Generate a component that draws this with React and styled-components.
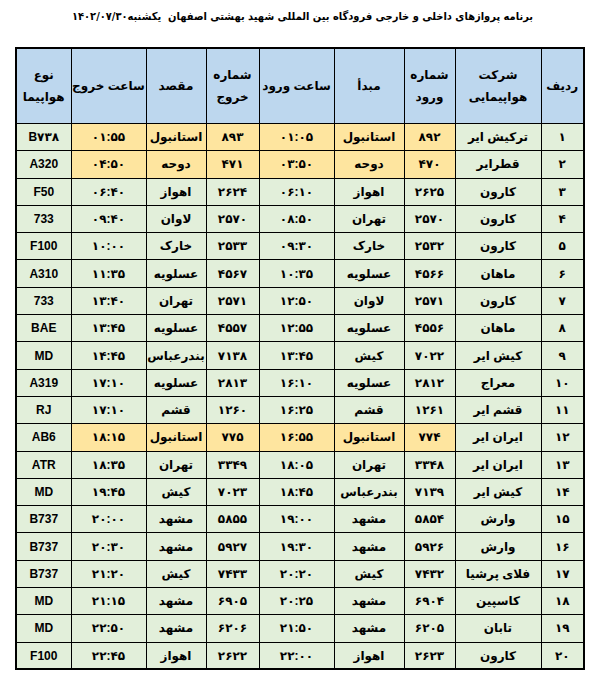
import styled, { createGlobalStyle } from "styled-components"

const GlobalStyle = createGlobalStyle`
    body {
        margin: 0;
        background: #ffffff;
        font-family: "Liberation Sans", "DejaVu Sans", sans-serif;
        color: #000;
    }
`

const columns = [
    { key: "row", title: "ردیف", width: 43 },
    { key: "airline", title: ["شرکت", "هواپیمایی"], width: 86 },
    { key: "inNo", title: ["شماره", "ورود"], width: 51, hl: true },
    { key: "from", title: "مبدأ", width: 70, hl: true },
    { key: "inTime", title: "ساعت ورود", width: 75, hl: true },
    { key: "outNo", title: ["شماره", "خروج"], width: 53, hl: true },
    { key: "to", title: "مقصد", width: 60, hl: true },
    { key: "outTime", title: "ساعت خروج", width: 75, hl: true },
    { key: "type", title: ["نوع", "هواپیما"], width: 55 },
]

const flights = [
    ["۱", "ترکیش ایر", "۸۹۲", "استانبول", "۰۱:۰۵", "۸۹۳", "استانبول", "۰۱:۵۵", "B۷۳۸", true],
    ["۲", "قطرایر", "۴۷۰", "دوحه", "۰۳:۵۰", "۴۷۱", "دوحه", "۰۴:۵۰", "A320", true],
    ["۳", "کارون", "۲۶۲۵", "اهواز", "۰۶:۱۰", "۲۶۲۴", "اهواز", "۰۶:۴۰", "F50"],
    ["۴", "کارون", "۲۵۷۰", "تهران", "۰۸:۵۰", "۲۵۷۰", "لاوان", "۰۹:۴۰", "733"],
    ["۵", "کارون", "۲۵۳۲", "خارک", "۰۹:۳۰", "۲۵۳۳", "خارک", "۱۰:۰۰", "F100"],
    ["۶", "ماهان", "۴۵۶۶", "عسلویه", "۱۰:۳۵", "۴۵۶۷", "عسلویه", "۱۱:۳۵", "A310"],
    ["۷", "کارون", "۲۵۷۱", "لاوان", "۱۲:۵۰", "۲۵۷۱", "تهران", "۱۳:۴۰", "733"],
    ["۸", "ماهان", "۴۵۵۶", "عسلویه", "۱۲:۵۵", "۴۵۵۷", "عسلویه", "۱۳:۴۵", "BAE"],
    ["۹", "کیش ایر", "۷۰۲۲", "کیش", "۱۳:۴۵", "۷۱۳۸", "بندرعباس", "۱۴:۴۵", "MD"],
    ["۱۰", "معراج", "۲۸۱۲", "عسلویه", "۱۶:۱۰", "۲۸۱۳", "عسلویه", "۱۷:۱۰", "A319"],
    ["۱۱", "قشم ایر", "۱۲۶۱", "قشم", "۱۶:۲۵", "۱۲۶۰", "قشم", "۱۷:۱۰", "RJ"],
    ["۱۲", "ایران ایر", "۷۷۴", "استانبول", "۱۶:۵۵", "۷۷۵", "استانبول", "۱۸:۱۵", "AB6", true],
    ["۱۳", "ایران ایر", "۳۳۴۸", "تهران", "۱۸:۰۵", "۳۳۴۹", "تهران", "۱۸:۳۵", "ATR"],
    ["۱۴", "کیش ایر", "۷۱۳۹", "بندرعباس", "۱۸:۴۵", "۷۰۲۳", "کیش", "۱۹:۴۵", "MD"],
    ["۱۵", "وارش", "۵۸۵۴", "مشهد", "۱۹:۰۰", "۵۸۵۵", "مشهد", "۲۰:۰۰", "B737"],
    ["۱۶", "وارش", "۵۹۲۶", "مشهد", "۱۹:۳۰", "۵۹۲۷", "مشهد", "۲۰:۳۰", "B737"],
    ["۱۷", "فلای پرشیا", "۷۴۳۲", "کیش", "۲۰:۲۰", "۷۴۳۳", "کیش", "۲۱:۲۰", "B737"],
    ["۱۸", "کاسپین", "۶۹۰۴", "مشهد", "۲۰:۲۵", "۶۹۰۵", "مشهد", "۲۱:۱۵", "MD"],
    ["۱۹", "تابان", "۶۲۰۵", "مشهد", "۲۱:۵۰", "۶۲۰۶", "مشهد", "۲۲:۵۰", "MD"],
    ["۲۰", "کارون", "۲۶۲۳", "اهواز", "۲۲:۰۰", "۲۶۲۲", "اهواز", "۲۲:۴۵", "F100"],
]

const Page = styled.div`
    direction: rtl;
    width: 605px;
    padding-top: 7px;
`

const Title = styled.h1`
    margin: 0;
    font-family: "DejaVu Sans Condensed", "DejaVu Sans", sans-serif;
    font-size: 11px;
    line-height: 20px;
    font-weight: 700;
    text-align: center;
`

const Table = styled.table`
    margin: 20px 20px 0 0;
    border-collapse: collapse;
    table-layout: fixed;
    width: 568px;
    border: 2px solid #000;
`

const Col = styled.col`
    width: ${p => p.$w}px;
`

const HeadCell = styled.th`
    height: 74px;
    padding: 0;
    border: 1px solid #000;
    background: #bdd7ee;
    font-size: 12px;
    font-weight: 700;
    line-height: 22px;
    text-align: center;
    vertical-align: middle;
`

const Row = styled.tr`
    height: 27.3px;
`

const Cell = styled.td`
    padding: 0;
    border: 1px solid #000;
    background: ${p => (p.$hl ? "#fee59f" : "#e2efda")};
    font-size: 12px;
    font-weight: 700;
    text-align: center;
    vertical-align: middle;
    white-space: nowrap;
`

const HeadTitle = ({ title }) =>
    Array.isArray(title) ? (
        <>
            {title[0]}
            <br />
            {title[1]}
        </>
    ) : (
        title
    )

export default function App() {
    return (
        <Page>
            <GlobalStyle />
            <Title>برنامه پروازهای داخلی و خارجی فرودگاه بین المللی شهید بهشتی اصفهان&nbsp; یکشنبه۱۴۰۲/۰۷/۳۰</Title>
            <Table>
                <colgroup>
                    {columns.map(c => (
                        <Col key={c.key} $w={c.width} />
                    ))}
                </colgroup>
                <thead>
                    <tr>
                        {columns.map(c => (
                            <HeadCell key={c.key}>
                                <HeadTitle title={c.title} />
                            </HeadCell>
                        ))}
                    </tr>
                </thead>
                <tbody>
                    {flights.map(f => (
                        <Row key={f[0]}>
                            {columns.map((c, i) => (
                                <Cell key={c.key} $hl={f[9] && c.hl}>
                                    {f[i]}
                                </Cell>
                            ))}
                        </Row>
                    ))}
                </tbody>
            </Table>
        </Page>
    )
}
